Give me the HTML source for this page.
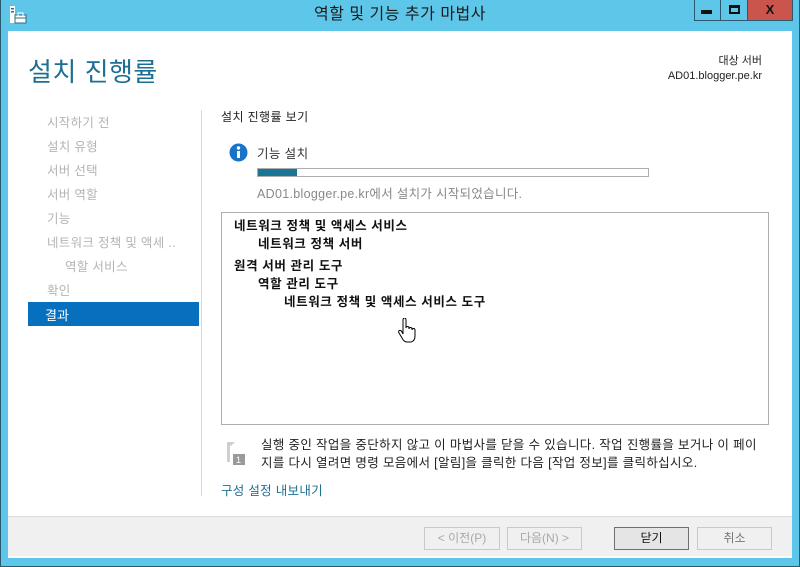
<!DOCTYPE html>
<html><head><meta charset="utf-8"><style>
*{margin:0;padding:0;box-sizing:border-box}
body{width:800px;height:567px;overflow:hidden;background:#5ec6e8;font-family:"Liberation Sans","Noto Sans CJK KR","NanumGothic",sans-serif;font-size:12px;color:#000;position:relative}
.abs{position:absolute}
.title{left:0;top:0;width:800px;height:31px;text-align:center;line-height:29px;font-size:16px;color:#1b1b1b;letter-spacing:0.5px}
.win{left:8px;top:31px;width:784px;height:485px;background:#fff}
.foot{left:8px;top:516px;width:784px;height:42px;background:#f0f0f0;border-top:1px solid #dcdcdc;border-bottom:2px solid #fafafa}
.side{left:47px;color:#b4b4b4;font-size:12.5px;letter-spacing:0.3px}
.btn{top:527px;height:23px;border:1px solid #c9c9c9;background:#f0f0f0;text-align:center;line-height:21px;font-size:12px;color:#a8a8a8}
.li{font-weight:bold;font-size:12.5px;color:#111;letter-spacing:0.6px}
</style></head><body>
<div class="abs" style="left:0;top:0;width:800px;height:567px;border:1px solid #2a5a70;border-top:none"></div>
<div class="abs title">역할 및 기능 추가 마법사</div>
<svg class="abs" style="left:9px;top:5px" width="18" height="20" viewBox="0 0 18 20"><rect x="1" y="1" width="5" height="17" fill="#fff"/><rect x="2" y="3" width="3" height="1.5" fill="#2a6c8e"/><rect x="2" y="6" width="3" height="1.5" fill="#2a6c8e"/><rect x="6" y="10" width="11" height="8" fill="#fff" stroke="#2a6c8e"/><rect x="9" y="8" width="5" height="3" fill="none" stroke="#fff"/><line x1="6" y1="13" x2="17" y2="13" stroke="#2a6c8e"/></svg>
<div class="abs" style="left:694px;top:0;width:27px;height:21px;border:1px solid #2a5a70;border-top:none"></div>
<div class="abs" style="left:701px;top:10px;width:11px;height:4px;background:#111"></div>
<div class="abs" style="left:721px;top:0;width:27px;height:21px;border:1px solid #2a5a70;border-top:none;border-left:none"></div>
<div class="abs" style="left:729px;top:5px;width:11px;height:9px;border:2px solid #111;border-top-width:3px"></div>
<div class="abs" style="left:747px;top:0;width:46px;height:21px;background:#c9554c;border:1px solid #2a5a70;border-top:none;text-align:center;line-height:20px;font-weight:bold;font-size:13px;color:#111">X</div>
<div class="abs win"></div>
<div class="abs" style="left:28px;top:52px;font-size:26px;color:#1c6f92;letter-spacing:0.5px">설치 진행률</div>
<div class="abs" style="right:38px;top:54px;text-align:right;font-size:11px;line-height:15px;color:#222">대상 서버<br>AD01.blogger.pe.kr</div>
<div class="abs" style="left:201px;top:110px;width:1px;height:386px;background:#d8d8d8"></div>
<div class="abs side" style="top:112px">시작하기 전</div>
<div class="abs side" style="top:136px">설치 유형</div>
<div class="abs side" style="top:160px">서버 선택</div>
<div class="abs side" style="top:184px">서버 역할</div>
<div class="abs side" style="top:208px">기능</div>
<div class="abs side" style="top:232px">네트워크 정책 및 액세 ..</div>
<div class="abs side" style="top:256px;left:65px">역할 서비스</div>
<div class="abs side" style="top:280px">확인</div>
<div class="abs" style="left:28px;top:302px;width:171px;height:24px;background:#0670bf"></div>
<div class="abs" style="left:45px;top:305px;color:#fff;font-size:13px">결과</div>
<div class="abs" style="left:221px;top:108px;font-size:12px;color:#222;letter-spacing:0.4px">설치 진행률 보기</div>
<svg class="abs" style="left:229px;top:143px" width="19" height="19"><circle cx="9.5" cy="9.5" r="9" fill="#1874c6"/><rect x="8" y="8" width="3" height="7" fill="#fff"/><circle cx="9.5" cy="5" r="1.7" fill="#fff"/></svg>
<div class="abs" style="left:257px;top:143px;color:#333;font-size:12.5px;letter-spacing:0.4px">기능 설치</div>
<div class="abs" style="left:257px;top:168px;width:392px;height:9px;border:1px solid #adadad;background:#fff"></div>
<div class="abs" style="left:258px;top:169px;width:39px;height:7px;background:#1a7597"></div>
<div class="abs" style="left:257px;top:183px;color:#888;font-size:12.5px;letter-spacing:0.3px">AD01.blogger.pe.kr에서 설치가 시작되었습니다.</div>
<div class="abs" style="left:221px;top:212px;width:548px;height:213px;border:1px solid #adadad"></div>
<div class="abs li" style="left:234px;top:215px">네트워크 정책 및 액세스 서비스</div>
<div class="abs li" style="left:258px;top:233px">네트워크 정책 서버</div>
<div class="abs li" style="left:234px;top:255px">원격 서버 관리 도구</div>
<div class="abs li" style="left:258px;top:273px">역할 관리 도구</div>
<div class="abs li" style="left:284px;top:291px">네트워크 정책 및 액세스 서비스 도구</div>
<svg class="abs" style="left:398px;top:318px" width="20" height="26" viewBox="0 0 20 26"><path d="M5 2 Q5 0 6.5 0 Q8 0 8 2 V10 Q8 8.5 9.5 8.5 Q11 8.5 11 10 V11 Q11 9.5 12.5 9.5 Q14 9.5 14 11 V12 Q14 10.5 15.5 10.5 Q17 10.5 17 12 V18 Q17 23 13 24 H9 Q6 24 4 20 L1 15 Q0 13 1.5 12.5 Q3 12 4 14 L5 16 Z" fill="#fff" stroke="#000" stroke-width="1"/></svg>
<svg class="abs" style="left:225px;top:440px" width="22" height="26"><path d="M2 2 L10 2 L6 6 Z" fill="#d0d0d0"/><rect x="2" y="2" width="3" height="20" fill="#cfcfcf"/><rect x="8" y="14" width="12" height="11" fill="#9a9a9a"/><text x="11" y="23" font-size="9" fill="#fff" font-family="Liberation Sans">1</text></svg>
<div class="abs" style="left:261px;top:436px;font-size:12.5px;line-height:18px;color:#222;width:515px;letter-spacing:0.35px">실행 중인 작업을 중단하지 않고 이 마법사를 닫을 수 있습니다. 작업 진행률을 보거나 이 페이<br>지를 다시 열려면 명령 모음에서 [알림]을 클릭한 다음 [작업 정보]를 클릭하십시오.</div>
<div class="abs" style="left:221px;top:480px;color:#1c6f92;font-size:12.5px;letter-spacing:0.3px">구성 설정 내보내기</div>
<div class="abs foot"></div>
<div class="abs btn" style="left:424px;width:76px">&lt; 이전(P)</div>
<div class="abs btn" style="left:507px;width:75px">다음(N) &gt;</div>
<div class="abs btn" style="left:614px;width:75px;border-color:#707070;background:#e5e5e5;color:#111">닫기</div>
<div class="abs btn" style="left:697px;width:75px;color:#777">취소</div>
</body></html>
